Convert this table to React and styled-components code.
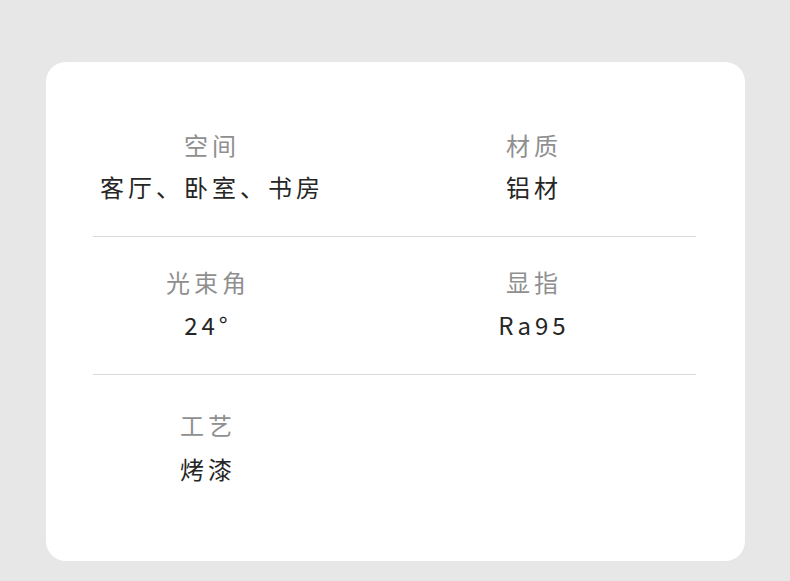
import styled, { createGlobalStyle } from 'styled-components';

const specs = [
    {
        top: 28, gap: 8,
        items: [
            { label: '空间', value: '客厅、卧室、书房' },
            { label: '材质', value: '铝材' },
        ],
    },
    {
        top: 28, gap: 9,
        items: [
            { label: '光束角', value: '24°', shift: 8 },
            { label: '显指', value: 'Ra95' },
        ],
    },
    {
        top: 33, gap: 10,
        items: [
            { label: '工艺', value: '烤漆', shift: 8 },
        ],
    },
];

function App () {

    return (
        <>
            <GlobalStyle />
            <Page>
                <Card>
                    {specs.map((row, i) => (
                        <div key={i}>
                            <Row $top={row.top}>
                                {row.items.map((item) => (
                                    <Cell key={item.label} $gap={row.gap} $shift={item.shift || 0}>
                                        <Label>{item.label}</Label>
                                        <Value>{item.value}</Value>
                                    </Cell>
                                ))}
                            </Row>
                            {i < specs.length - 1 && <Divider />}
                        </div>
                    ))}
                </Card>
            </Page>
        </>
    );
};

export default App;


const GlobalStyle = createGlobalStyle`
    body {
        margin: 0;
        background: #e7e7e7;
        font-family: 'Noto Sans CJK SC', 'Noto Sans', sans-serif;
    }
`;

const Page = styled.div`
    width: 790px;
    height: 581px;
    padding: 62px 0 0 46px;
    box-sizing: border-box;
`;

const Card = styled.div`
    width: 699px;
    height: 499px;
    box-sizing: border-box;
    background: #FFFFFF;
    border-radius: 20px;
    padding-top: 38px;
`;

const Row = styled.div`
    display: grid;
    grid-template-columns: 322px 322px;
    padding: ${(p) => p.$top}px 0 32px 3px;
`;

const Cell = styled.div`
    display: flex;
    flex-direction: column;
    align-items: center;
    gap: ${(p) => p.$gap}px;
    padding-right: ${(p) => p.$shift}px;
`;

const Label = styled.div`
    font-size: 24px;
    line-height: 34px;
    letter-spacing: 4px;
    padding-left: 4px;
    color: #8f8f8f;
`;

const Value = styled.div`
    font-size: 24px;
    line-height: 34px;
    letter-spacing: 4px;
    padding-left: 4px;
    color: #262626;
`;

const Divider = styled.div`
    height: 1px;
    margin: 0 49px 0 47px;
    background: #dadada;
`;
